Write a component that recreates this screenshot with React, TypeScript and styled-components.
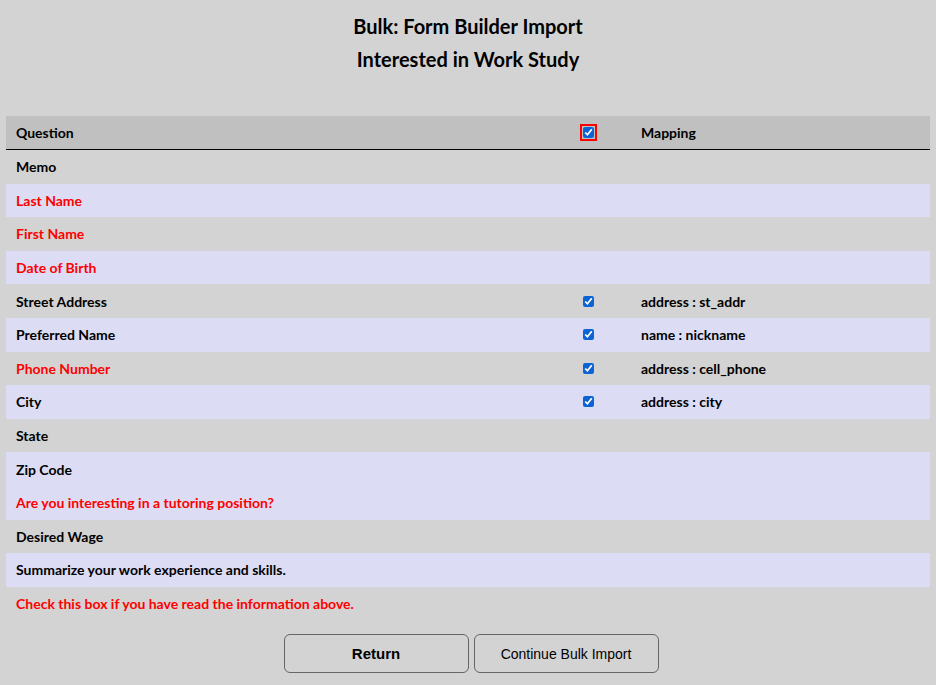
import React from 'react';
import styled, { createGlobalStyle } from 'styled-components';

const Global = createGlobalStyle`
  body {
    margin: 0;
    background: #d3d3d3;
    font-family: Lato, "Noto Sans", sans-serif;
  }
`;

const Page = styled.div`
  padding: 10px 6px 0;
`;

const Title = styled.h1`
  margin: 0;
  text-align: center;
  font-size: 20px;
  font-weight: 700;
  line-height: 33px;
  color: #000;
`;

const Table = styled.div`
  margin-top: 40px;
  display: flex;
  flex-direction: column;
`;

const Row = styled.div<{ $bg: string; $header?: boolean }>`
  display: grid;
  grid-template-columns: 539px 86px 1fr;
  align-items: center;
  height: ${(p) => (p.$header ? '33px' : '33.6px')};
  background: ${(p) => p.$bg};
  border-bottom: ${(p) => (p.$header ? '1px solid #000' : 'none')};
  font-size: 14px;
  font-weight: 700;
`;

const Cell = styled.div<{ $red?: boolean }>`
  padding-left: 10px;
  color: ${(p) => (p.$red ? '#ff0000' : '#000')};
`;

const CheckCell = styled.div`
  display: flex;
  justify-content: center;
`;

const Check = styled.input<{ $outlined?: boolean }>`
  width: 11px;
  height: 11px;
  margin: 0;
  accent-color: #0b63d6;
  outline: ${(p) => (p.$outlined ? '2px solid #ff0000' : 'none')};
  outline-offset: 1px;
`;

const Buttons = styled.div`
  display: flex;
  justify-content: center;
  gap: 5px;
  margin-top: 14px;
  margin-left: 6px;
`;

const Button = styled.button<{ $bold?: boolean }>`
  width: 185px;
  height: 39px;
  border: 1px solid #666;
  border-radius: 6px;
  background: #d3d3d3;
  font-family: "Liberation Sans", Arial, sans-serif;
  font-size: ${(p) => (p.$bold ? '15px' : '14px')};
  font-weight: ${(p) => (p.$bold ? 700 : 500)};
  color: #000;
`;

const G = '#d3d3d3';
const L = '#dcdcf4';

const rows: { q: string; red?: boolean; bg: string; map?: string }[] = [
  { q: 'Memo', bg: G },
  { q: 'Last Name', red: true, bg: L },
  { q: 'First Name', red: true, bg: G },
  { q: 'Date of Birth', red: true, bg: L },
  { q: 'Street Address', bg: G, map: 'address : st_addr' },
  { q: 'Preferred Name', bg: L, map: 'name : nickname' },
  { q: 'Phone Number', red: true, bg: G, map: 'address : cell_phone' },
  { q: 'City', bg: L, map: 'address : city' },
  { q: 'State', bg: G },
  { q: 'Zip Code', bg: L },
  { q: 'Are you interesting in a tutoring position?', red: true, bg: L },
  { q: 'Desired Wage', bg: G },
  { q: 'Summarize your work experience and skills.', bg: L },
  { q: 'Check this box if you have read the information above.', red: true, bg: G },
];

export default function App() {
  return (
    <Page>
      <Global />
      <Title>Bulk: Form Builder Import</Title>
      <Title>Interested in Work Study</Title>
      <Table>
        <Row $bg="#c0c0c0" $header>
          <Cell>Question</Cell>
          <CheckCell>
            <Check type="checkbox" defaultChecked $outlined />
          </CheckCell>
          <Cell>Mapping</Cell>
        </Row>
        {rows.map((r) => (
          <Row key={r.q} $bg={r.bg}>
            <Cell $red={r.red}>{r.q}</Cell>
            <CheckCell>{r.map && <Check type="checkbox" defaultChecked />}</CheckCell>
            <Cell>{r.map}</Cell>
          </Row>
        ))}
      </Table>
      <Buttons>
        <Button $bold>Return</Button>
        <Button>Continue Bulk Import</Button>
      </Buttons>
    </Page>
  );
}
